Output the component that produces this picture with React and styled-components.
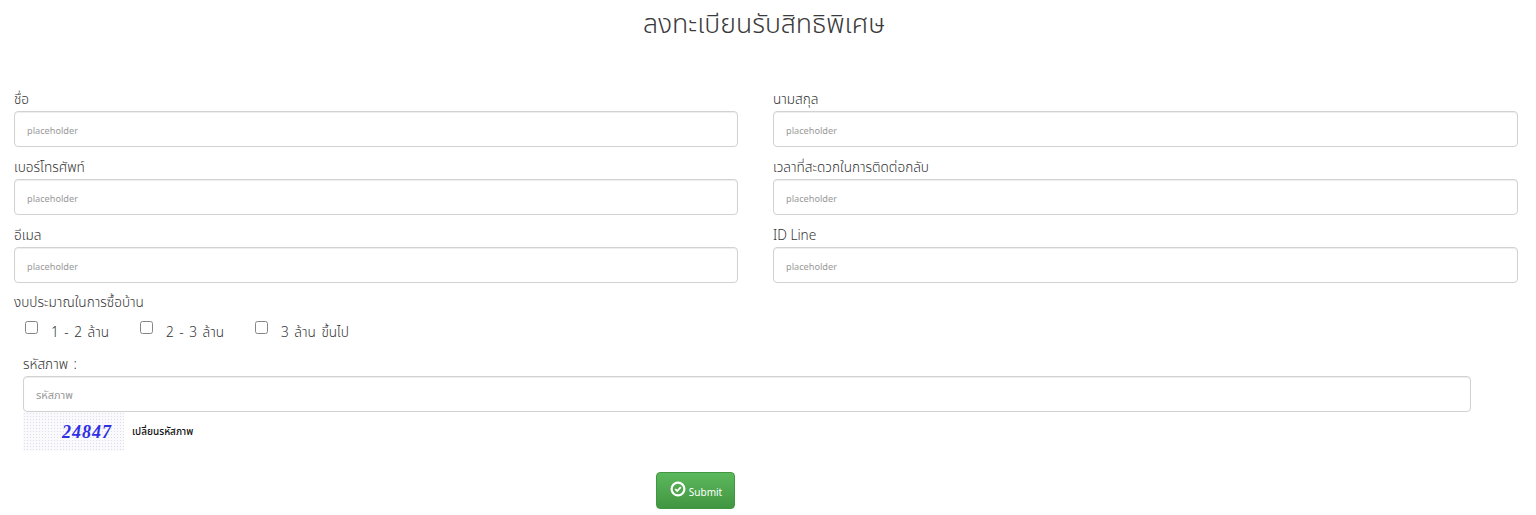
import React from 'react';
import styled, { createGlobalStyle } from 'styled-components';

const FONT = `"Noto Sans Thai", "Noto Sans", "Open Sans", "DejaVu Sans", "Liberation Sans", sans-serif`;

const GlobalStyle = createGlobalStyle`
  html, body {
    margin: 0;
    padding: 0;
    background: #fff;
    font-family: ${FONT};
    color: #333;
  }
  * { box-sizing: border-box; }
`;

const Page = styled.form`
  width: 1536px;
  height: 515px;
  overflow: hidden;
  padding-left: 14px;
`;

const Title = styled.h1`
  margin: 0 0 36px;
  width: 1500px;
  height: 50px;
  line-height: 50px;
  text-align: center;
  font-size: 26.6px;
  font-weight: 300;
  color: #3a3a3a;
`;

const FieldGrid = styled.div`
  display: grid;
  grid-template-columns: 724px 745px;
  column-gap: 35px;
`;

const Field = styled.div`
  height: 68px;
  padding-top: 3px;
`;

const Label = styled.label`
  display: block;
  height: 22px;
  line-height: 22px;
  font-size: 13.6px;
  font-weight: 300;
  color: #333;
`;

const Input = styled.input`
  display: block;
  width: 100%;
  height: 36px;
  padding: 3px 12px 0;
  border: 1px solid #d2d2d2;
  border-radius: 4px;
  background: #fff;
  font-family: ${FONT};
  font-size: 9.2px;
  box-shadow: inset 0 1px 1px rgba(0, 0, 0, 0.075);

  &::placeholder {
    color: #999;
    opacity: 1;
  }
`;

const BudgetLabel = styled(Label)`
  margin-top: 2px;
`;

const BudgetRow = styled.div`
  display: flex;
  height: 41px;
  padding: 7px 0 0 11px;
  align-items: flex-start;
`;

const BudgetOption = styled.label`
  display: flex;
  align-items: flex-start;
  margin-right: ${(p) => p.$gap}px;
  font-size: 13.6px;
  font-weight: 300;
  color: #333;
  word-spacing: 2px;
`;

const Box = styled.span`
  display: block;
  width: 13px;
  height: 13px;
  margin-right: 13px;
  border: 1px solid #858585;
  border-radius: 2.5px;
  background: #fff;
`;

const OptionText = styled.span`
  line-height: 20px;
  margin-top: 2px;
`;

const CaptchaBlock = styled.div`
  padding-left: 9px;
`;

const CaptchaLabel = styled(Label)`
  height: 21px;
  line-height: 20px;
  word-spacing: 2px;
`;

const CaptchaInput = styled(Input)`
  width: 1448px;
  font-size: 11px;
`;

const CaptchaRow = styled.div`
  display: flex;
  align-items: center;
  height: 39px;
`;

const CaptchaImage = styled.div`
  position: relative;
  width: 101px;
  height: 39px;
  margin-right: 8px;
  background-color: #fafafc;
  background-image:
    radial-gradient(#dcdcec 0.6px, transparent 0.7px),
    radial-gradient(#e6dfe8 0.5px, transparent 0.6px);
  background-size: 3px 3px, 5px 4px;
`;

const CaptchaDigits = styled.span`
  position: absolute;
  left: 39px;
  top: 9px;
  font-family: "Liberation Serif", serif;
  font-style: italic;
  font-weight: 700;
  font-size: 18px;
  line-height: 22px;
  letter-spacing: 1px;
  color: #2f2fe6;
`;

const ChangeLink = styled.a`
  font-size: 10px;
  font-weight: 500;
  color: #111;
`;

const SubmitRow = styled.div`
  display: flex;
  padding-left: 642px;
  padding-top: 21px;
`;

const SubmitButton = styled.button`
  display: flex;
  align-items: center;
  justify-content: center;
  gap: 3px;
  width: 79px;
  height: 37px;
  padding: 0 0 0 1px;
  border: 1px solid #419641;
  border-radius: 4px;
  background: linear-gradient(to bottom, #5cb85c, #419641);
  color: #fff;
  font-family: ${FONT};
  font-size: 10px;
`;

const SubmitText = styled.span`
  margin-top: 4px;
`;

const IconWrap = styled.svg`
  margin-top: -4px;
`;

const CheckIcon = () => (
  <IconWrap width="16" height="16" viewBox="0 0 16 16" fill="none">
    <circle cx="8" cy="8" r="6.4" stroke="#fff" strokeWidth="2.2" />
    <path d="M5.2 8.2 L7.2 10 L10.8 6.2" stroke="#fff" strokeWidth="1.8" />
  </IconWrap>
);

const rows = [
  ['ชื่อ', 'นามสกุล'],
  ['เบอร์โทรศัพท์', 'เวลาที่สะดวกในการติดต่อกลับ'],
  ['อีเมล', 'ID Line'],
];

const budgets = [
  { text: '1 - 2 ล้าน', gap: 31 },
  { text: '2 - 3 ล้าน', gap: 31 },
  { text: '3 ล้าน ขึ้นไป', gap: 0 },
];

export default function App() {
  return (
    <Page onSubmit={(e) => e.preventDefault()}>
      <GlobalStyle />
      <Title>ลงทะเบียนรับสิทธิพิเศษ</Title>
      <FieldGrid>
        {rows.flat().map((label) => (
          <Field key={label}>
            <Label>{label}</Label>
            <Input placeholder="placeholder" />
          </Field>
        ))}
      </FieldGrid>
      <BudgetLabel>งบประมาณในการซื้อบ้าน</BudgetLabel>
      <BudgetRow>
        {budgets.map((b) => (
          <BudgetOption key={b.text} $gap={b.gap}>
            <Box />
            <OptionText>{b.text}</OptionText>
          </BudgetOption>
        ))}
      </BudgetRow>
      <CaptchaBlock>
        <CaptchaLabel>รหัสภาพ :</CaptchaLabel>
        <CaptchaInput placeholder="รหัสภาพ" />
        <CaptchaRow>
          <CaptchaImage>
            <CaptchaDigits>24847</CaptchaDigits>
          </CaptchaImage>
          <ChangeLink>เปลี่ยนรหัสภาพ</ChangeLink>
        </CaptchaRow>
      </CaptchaBlock>
      <SubmitRow>
        <SubmitButton type="submit">
          <CheckIcon />
          <SubmitText>Submit</SubmitText>
        </SubmitButton>
      </SubmitRow>
    </Page>
  );
}
